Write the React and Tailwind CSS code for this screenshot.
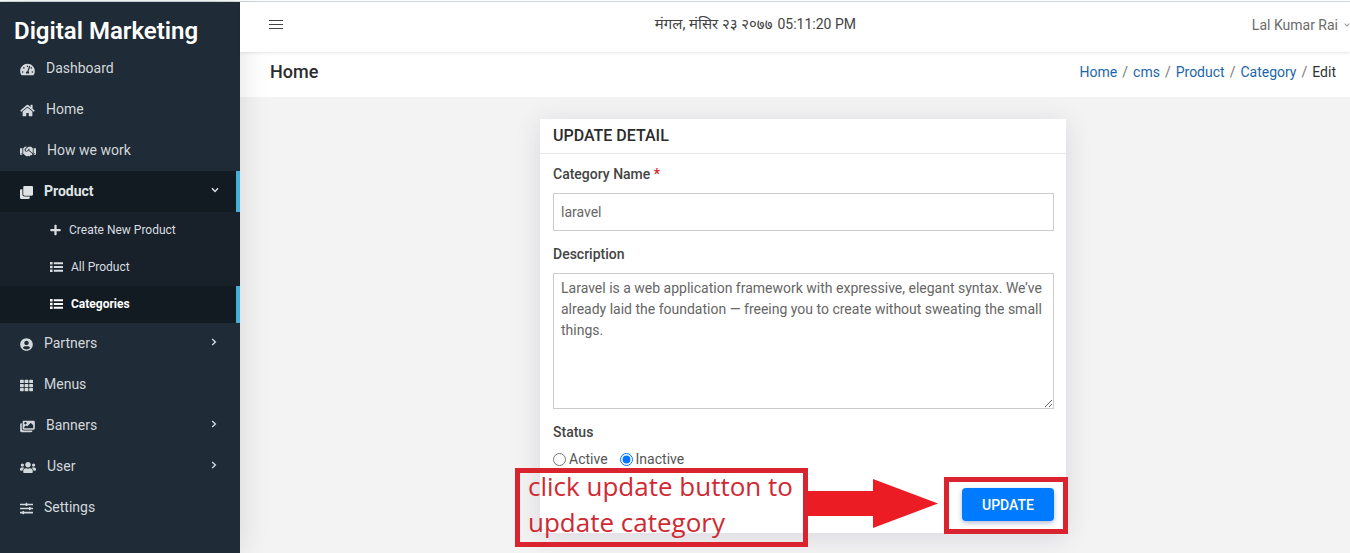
import React from "react";
import {
  FaTachometerAlt,
  FaHome,
  FaHandshake,
  FaClone,
  FaPlus,
  FaUserCircle,
  FaTh,
  FaImages,
  FaUsers,
  FaSlidersH,
} from "react-icons/fa";

function Chevron({ className }) {
  return (
    <svg viewBox="0 0 8 8" className={className} fill="none" stroke="currentColor" strokeWidth="1.4" aria-hidden="true">
      <path d="M2.2 1 L5.4 4 L2.2 7" />
    </svg>
  );
}

function ListIcon({ className }) {
  return (
    <svg viewBox="0 0 13 12" className={className} fill="currentColor" aria-hidden="true">
      <path d="M0 1h2.6v2.4H0zM0 4.8h2.6v2.4H0zM0 8.6h2.6V11H0zM3.8 1.2H13v2H3.8zM3.8 5H13v2H3.8zM3.8 8.8H13v2H3.8z" />
    </svg>
  );
}

const before = [
  { label: "Dashboard", Icon: FaTachometerAlt, size: "w-[15px]" },
  { label: "Home", Icon: FaHome, size: "w-[15px]" },
  { label: "How we work", Icon: FaHandshake, size: "w-4" },
];

const after = [
  { label: "Partners", Icon: FaUserCircle, size: "w-[13px]", more: true },
  { label: "Menus", Icon: FaTh, size: "w-[13px]" },
  { label: "Banners", Icon: FaImages, size: "w-[15px]", more: true },
  { label: "User", Icon: FaUsers, size: "w-4", more: true },
  { label: "Settings", Icon: FaSlidersH, size: "w-[13px]" },
];

const products = [
  { label: "Create New Product", Icon: FaPlus, size: "w-[11px]" },
  { label: "All Product", Icon: ListIcon, size: "w-[13px]" },
  { label: "Categories", Icon: ListIcon, size: "w-[13px]", active: true },
];

function NavItem({ label, Icon, size, more, open }) {
  return (
    <a
      href="#"
      className={
        "flex h-[41px] items-center gap-[11px] pb-[2px] pl-5 text-sm " +
        (open
          ? "border-r-4 border-[#45aed6] bg-[#131b22] pr-[17px] font-bold text-[#dfe3e6]"
          : "pr-[22px] text-[#d3d8dc]")
      }
    >
      <span className="pt-1">
        <Icon className={"h-[13px] " + size} />
      </span>
      <span className="flex-1">{label}</span>
      {(more || open) && <Chevron className={"mb-[2px] size-2 " + (open ? "rotate-90" : "")} />}
    </a>
  );
}

function Sidebar() {
  return (
    <aside className="relative z-10 w-60 shrink-0 bg-[#1f2b36] shadow-[0_0_28px_rgba(0,0,0,0.12)]">
      <div className="flex h-[46px] items-end px-[14px]">
        <a href="#" className="text-2xl leading-[34px] font-semibold text-white">Digital Marketing</a>
      </div>
      <nav>
        {before.map((item) => (
          <NavItem key={item.label} {...item} />
        ))}
        <NavItem label="Product" Icon={FaClone} size="w-[13px]" open />
        <div className="bg-[#18212a]">
          {products.map(({ label, Icon, size, active }) => (
            <a
              key={label}
              href="#"
              className={
                "flex h-[37px] items-center gap-2 pb-[2px] pl-[50px] text-xs " +
                (active
                  ? "border-r-4 border-[#45aed6] bg-[#131b22] font-bold text-white"
                  : "text-[#d9dde0]")
              }
            >
              <Icon className={"h-3 " + size} />
              <span>{label}</span>
            </a>
          ))}
        </div>
        {after.map((item) => (
          <NavItem key={item.label} {...item} />
        ))}
      </nav>
    </aside>
  );
}

function TopBar() {
  return (
    <header className="relative z-20 flex h-[50px] items-center bg-white pb-[5px] pl-[29px] text-sm shadow-[0_1px_3px_rgba(0,0,0,0.1)]">
      <button type="button" aria-label="Toggle menu" className="text-[#444]">
        <svg viewBox="0 0 14 10" className="h-[10px] w-[14px]" stroke="currentColor" strokeWidth="1" aria-hidden="true">
          <path d="M0 0.5H14M0 4.5H14M0 8.5H14" />
        </svg>
      </button>
      <div className="flex flex-1 items-center justify-center gap-[5px] pr-6 text-[#444]">
        <span className="text-[15px]">मंगल, मंसिर २३ २०७७</span>
        <span>05:11:20 PM</span>
      </div>
      <button type="button" className="flex items-center gap-[6px] text-[#6b6b6b]">
        Lal Kumar Rai
        <Chevron className="size-[6px] rotate-90 text-[#999]" />
      </button>
    </header>
  );
}

const crumbs = ["Home", "cms", "Product", "Category"];

function PageHead() {
  return (
    <div className="flex h-[45px] items-center justify-between bg-white pr-[14px] pb-[5px] pl-[30px]">
      <h1 className="text-lg leading-6 font-medium text-[#2b2b2b]">Home</h1>
      <nav aria-label="Breadcrumb" className="flex gap-[5px] text-sm">
        {crumbs.map((c) => (
          <React.Fragment key={c}>
            <a href="#" className="text-[#1c66a8]">{c}</a>
            <span className="text-[#777]">/</span>
          </React.Fragment>
        ))}
        <span className="text-[#333]">Edit</span>
      </nav>
    </div>
  );
}

function UpdateCard() {
  return (
    <section className="relative w-full max-w-[526px] bg-white shadow-[0_4px_24px_rgba(60,60,110,0.14)]">
      <h2 className="border-b border-[#e6e6e6] px-[13px] py-[5px] text-base font-medium text-[#2b2b2b] uppercase">Update Detail</h2>
      <form className="pt-[10px] pr-3 pb-3 pl-[13px] text-sm text-[#555]" onSubmit={(e) => e.preventDefault()}>
        <label htmlFor="name" className="block font-medium text-[#444]">
          Category Name <span className="text-[#e02020]">*</span>
        </label>
        <input
          id="name"
          type="text"
          defaultValue="laravel"
          className="mt-[9px] block h-[38px] w-full border border-[#ccc] px-[7px] text-[#666]"
        />
        <label htmlFor="description" className="mt-[13px] block font-medium text-[#444]">Description</label>
        <textarea
          id="description"
          defaultValue="Laravel is a web application framework with expressive, elegant syntax. We’ve already laid the foundation — freeing you to create without sweating the small things."
          className="mt-[9px] block h-[136px] w-full border border-[#ccc] px-[7px] py-1 leading-[21px] text-[#666]"
        />
        <fieldset>
          <legend className="pt-[13px] font-medium text-[#444]">Status</legend>
          <div className="mt-[7px] flex gap-3">
            <label className="flex items-center gap-[3px]">
              <input type="radio" name="status" className="size-[13px]" />
              Active
            </label>
            <label className="flex items-center gap-[3px]">
              <input type="radio" name="status" defaultChecked className="size-[13px]" />
              Inactive
            </label>
          </div>
        </fieldset>
        <div className="mt-[19px] flex justify-end">
          <div className="relative">
            <button
              type="submit"
              className="block h-[33px] w-[92px] rounded bg-[#007bff] font-medium text-white uppercase shadow-[0_2px_5px_rgba(40,60,140,0.35)]"
            >
              Update
            </button>
            <div className="pointer-events-none absolute -top-[11px] -right-[14px] -bottom-[13px] -left-[18px] border-5 border-[#d9232e]" />
          </div>
        </div>
      </form>
      <p className="absolute top-[349px] -left-[25px] h-[79px] w-[293px] border-5 border-[#d9232e] pl-2 font-['Open_Sans','Noto_Sans',sans-serif] text-[26px] leading-[36px] whitespace-nowrap text-[#cf2a33]">
        <span className="-mt-[5px] block">
          click update button to
          <br />
          update category
        </span>
      </p>
      <svg viewBox="0 0 130 50" className="absolute top-[360px] left-[268px] h-[50px] w-[130px]" aria-hidden="true">
        <path d="M0 12H65V0L130 24.5L65 49V37H0Z" fill="#ec1c24" />
      </svg>
    </section>
  );
}

export default function App() {
  return (
    <div className="flex min-h-screen flex-col overflow-hidden bg-[#f3f3f3] font-[Roboto,'Noto_Sans',sans-serif]">
      <div className="h-[2px] border-b border-[#d3d9dc] bg-white" />
      <div className="flex flex-1">
        <Sidebar />
        <div className="min-w-0 flex-1">
          <TopBar />
          <PageHead />
          <main className="flex justify-center pt-[22px] pl-4">
            <UpdateCard />
          </main>
        </div>
      </div>
    </div>
  );
}
